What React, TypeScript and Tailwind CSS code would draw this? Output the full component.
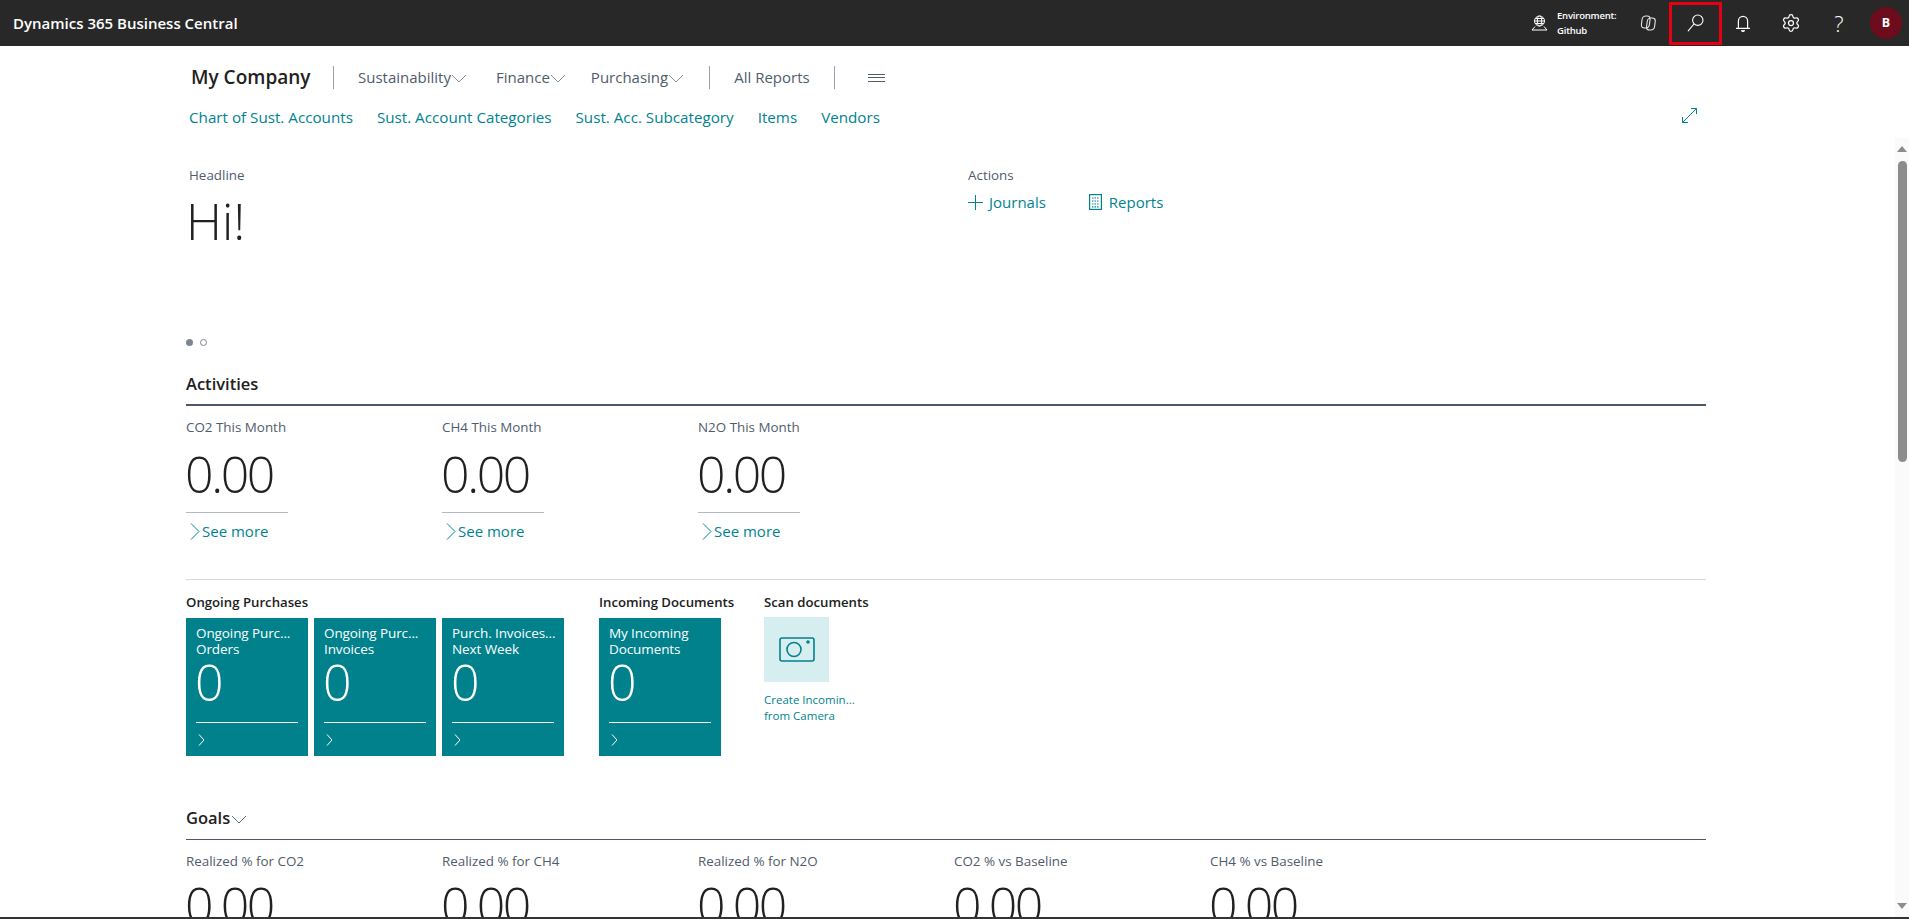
import { Settings } from "lucide-react";

const NAV_MENUS = [
  { name: "Sustainability", gap: "mr-[29px]" },
  { name: "Finance", gap: "mr-[25px]" },
  { name: "Purchasing", gap: "mr-[25px]" },
];
const NAV_LINKS = ["Chart of Sust. Accounts", "Sust. Account Categories", "Sust. Acc. Subcategory", "Items", "Vendors"];
const ACTIVITIES = ["CO2 This Month", "CH4 This Month", "N2O This Month"];
const GOALS = ["Realized % for CO2", "Realized % for CH4", "Realized % for N2O", "CO2 % vs Baseline", "CH4 % vs Baseline"];

function DownArrow({ className }: { className?: string }) {
  return (
    <svg width="16" height="9" viewBox="0 0 16 9" fill="none" stroke="currentColor" strokeWidth="0.9" className={className}>
      <path d="M1 1l7 7 7-7" />
    </svg>
  );
}

function Tile({ line1, line2 }: { line1: string; line2: string }) {
  return (
    <div className="w-[122px] h-[138px] bg-[#00818c] text-white px-[10px] pt-[7px] flex flex-col">
      <p className="text-[13.5px] leading-[16px] tracking-[-0.1px] whitespace-nowrap">{line1}</p>
      <p className="text-[13.5px] leading-[16px] tracking-[-0.1px] whitespace-nowrap">{line2}</p>
      <p className="text-[50px] leading-[50px] font-light ml-[-1px] h-[65px]">0</p>
      <div className="border-t border-white" />
      <svg width="7" height="12" viewBox="0 0 7 12" fill="none" stroke="white" strokeWidth="1" className="mt-[11px] ml-[2px]">
        <path d="M1 .5L6 6l-5 5.5" />
      </svg>
    </div>
  );
}

function Cue({ label }: { label: string }) {
  return <p className="text-[13.4px] leading-[20px] text-[#505c6d] whitespace-nowrap">{label}</p>;
}

export default function App() {
  return (
    <div className="h-[919px] w-full overflow-hidden flex flex-col bg-white font-['Open_Sans',sans-serif]">
      {/* Top bar */}
      <header className="h-[46px] shrink-0 bg-[#282828] text-white flex items-center">
        <span className="ml-[13px] text-[15px] font-semibold">Dynamics 365 Business Central</span>
        <div className="ml-auto flex items-center h-full">
          <svg width="17" height="16" viewBox="0 0 17 16" fill="none" stroke="white" strokeWidth="1" className="mr-[9px]">
            <circle cx="8.5" cy="6" r="5" />
            <ellipse cx="8.5" cy="6" rx="2.2" ry="5" />
            <path d="M3.5 6h10M4.2 3.5h8.6M4.2 8.5h8.6" />
            <path d="M4 11.5L1 15h15l-3-3.5" strokeLinejoin="round" />
          </svg>
          <div className="w-[66px] text-[9.5px] leading-[15px] font-semibold tracking-[-0.2px]">
            <p>Environment:</p>
            <p>Github</p>
          </div>
          <button className="w-[48px] h-full flex items-center justify-center">
            {/* Copilot */}
            <svg width="17" height="16" viewBox="0 0 17 16" fill="none" stroke="#e6e6e6" strokeWidth="1.1">
              <rect x="2.4" y="1" width="8" height="12" rx="3.4" transform="skewX(-7) translate(1.2 0)" />
              <rect x="7.4" y="3" width="8" height="12" rx="3.4" transform="skewX(-7) translate(1.6 0)" />
            </svg>
          </button>
          <button className="relative w-[48px] h-full flex items-center justify-center">
            <svg width="17" height="18" viewBox="0 0 17 18" fill="none" stroke="white" strokeWidth="1.1">
              <circle cx="10.8" cy="6.2" r="5.2" />
              <path d="M7 10L1.2 16.8" strokeLinecap="round" />
            </svg>
            {/* red annotation box */}
            <span className="absolute left-[-2px] right-[-3px] top-[2px] bottom-[1px] border-[3px] border-[#e60012] rounded-[1px]" />
          </button>
          <button className="w-[48px] h-full flex items-center justify-center">
            <svg width="14" height="17" viewBox="0 0 14 17" fill="none" stroke="white" strokeWidth="1.2">
              <path d="M2.4 13V6a4.6 4.6 0 019.2 0v7M.5 13.4h13" strokeLinecap="round" />
              <path d="M5.4 15.3a1.7 1.7 0 003.2 0" fill="white" />
            </svg>
          </button>
          <button className="w-[48px] h-full flex items-center justify-center">
            <Settings className="w-[20px] h-[20px]" strokeWidth={1.5} />
          </button>
          <button className="w-[48px] h-full flex items-center justify-center text-[22px] font-light">?</button>
          <div className="w-[46px] h-full flex items-center justify-center">
            <span className="w-[32px] h-[32px] rounded-full bg-[#6c0c1c] flex items-center justify-center text-[12.5px] font-bold">B</span>
          </div>
        </div>
      </header>

      {/* Role center nav */}
      <nav className="h-[92px] shrink-0 relative">
        <div className="h-[62px] pt-[1px] pl-[191px] flex items-center text-[#505c6d] text-[15px]">
          <span className="text-[19px] font-semibold text-[#212121] w-[142px] whitespace-nowrap">My Company</span>
          <div className="w-px h-[23px] bg-[#9aa1ac] mr-[24px]" />
          {NAV_MENUS.map((m) => (
            <span key={m.name} className={`flex items-center whitespace-nowrap ${m.gap}`}>
              {m.name}
              <DownArrow className="text-[#7d8592] mt-[2px]" />
            </span>
          ))}
          <div className="w-px h-[23px] bg-[#9aa1ac] mr-[24px]" />
          <span className="whitespace-nowrap">All Reports</span>
          <div className="w-px h-[23px] bg-[#9aa1ac] ml-[24px] mr-[33px]" />
          <div className="w-[17px] flex flex-col gap-[2.5px]">
            <div className="h-px bg-[#505c6d]" />
            <div className="h-px bg-[#505c6d]" />
            <div className="h-px bg-[#505c6d]" />
          </div>
        </div>
        <div className="pl-[189px] mt-[-2px] flex gap-[24px] text-[15.2px] leading-[22px] text-[#00838f]">
          {NAV_LINKS.map((l) => (
            <span key={l} className="whitespace-nowrap">{l}</span>
          ))}
        </div>
        <svg className="absolute left-[1682px] top-[62px]" width="15" height="15" viewBox="0 0 15 15" fill="none" stroke="#00838f" strokeWidth="1">
          <path d="M.5 14.5l14-14M9 .5h5.5V6M.5 9v5.5H6" />
        </svg>
      </nav>

      {/* Scrolling body */}
      <div className="flex-1 min-h-0 flex">
        <main className="flex-1 min-w-0 overflow-hidden pl-[186px] pr-[189px]">
          <section className="h-[233px] pt-[27px] flex">
            <div className="w-[782px] pl-[3px] flex flex-col">
              <Cue label="Headline" />
              <p className="text-[50px] leading-[60px] font-light text-[#212121] mt-[6px] ml-[-3px]">Hi!</p>
              <div className="mt-[88px] ml-[-3px] flex items-center gap-[7px]">
                <span className="w-[7px] h-[7px] rounded-full bg-[#7d8592]" />
                <span className="w-[7px] h-[7px] rounded-full border border-[#7d8592]" />
              </div>
            </div>
            <div className="flex flex-col">
              <Cue label="Actions" />
              <div className="flex items-center text-[15px] text-[#00838f] mt-[6px] leading-[22px]">
                <svg width="15" height="15" viewBox="0 0 15 15" stroke="#00838f" strokeWidth="1" className="mr-[6px]">
                  <path d="M7.5 0v15M0 7.5h15" />
                </svg>
                <span>Journals</span>
                <svg width="13" height="16" viewBox="0 0 13 16" fill="none" stroke="#00838f" strokeWidth="1.2" className="ml-[43px] mr-[7px]">
                  <rect x=".6" y=".6" width="11.8" height="14.8" />
                  <path d="M3 4h7M3 7h7M3 10h7M3 12.8h7" strokeDasharray="1.5 1" />
                </svg>
                <span>Reports</span>
              </div>
            </div>
          </section>

          {/* Activities */}
          <h2 className="text-[16.5px] leading-[26px] font-semibold text-[#212121]">Activities</h2>
          <div className="h-[2px] bg-[#4d5669] mt-[7px]" />
          <div className="flex mt-[11px]">
            {ACTIVITIES.map((a) => (
              <div key={a} className="w-[256px]">
                <Cue label={a} />
                <p className="text-[50px] leading-[60px] font-light tracking-[-2.4px] text-[#212121] mt-[7px] ml-[-1px]">0.00</p>
                <div className="w-[102px] border-t border-[#b4b8c0] mt-[8px]" />
                <div className="flex items-center mt-[7px] text-[15px] leading-[22px] text-[#00838f]">
                  <svg width="10" height="17" viewBox="0 0 10 17" fill="none" stroke="currentColor" strokeWidth="1" className="ml-[4px] mr-[2px]">
                    <path d="M1 .5l8 8-8 8" />
                  </svg>
                  <span>See more</span>
                </div>
              </div>
            ))}
          </div>
          <div className="h-px bg-[#d8d8d8] mt-[37px]" />

          {/* Cue groups */}
          <div className="flex mt-[13px]">
            <div className="w-[413px]">
              <h3 className="text-[13.2px] leading-[18px] font-semibold text-[#212121]">Ongoing Purchases</h3>
              <div className="flex gap-[6px] mt-[7px]">
                <Tile line1="Ongoing Purc..." line2="Orders" />
                <Tile line1="Ongoing Purc..." line2="Invoices" />
                <Tile line1="Purch. Invoices..." line2="Next Week" />
              </div>
            </div>
            <div className="w-[165px]">
              <h3 className="text-[13.2px] leading-[18px] font-semibold text-[#212121] whitespace-nowrap">Incoming Documents</h3>
              <div className="mt-[7px]">
                <Tile line1="My Incoming" line2="Documents" />
              </div>
            </div>
            <div>
              <h3 className="text-[13.2px] leading-[18px] font-semibold text-[#212121] whitespace-nowrap">Scan documents</h3>
              <div className="w-[65px] h-[65px] mt-[6px] bg-[#d6eef0] flex items-center justify-center">
                <svg width="36" height="25" viewBox="0 0 36 25" fill="none" stroke="#00818c" strokeWidth="1.6">
                  <rect x="1" y="1" width="34" height="23" rx="2" />
                  <circle cx="15" cy="12.5" r="7" />
                  <circle cx="29" cy="5" r="1" fill="#00818c" />
                </svg>
              </div>
              <div className="mt-[10px] text-[11.5px] leading-[16px] text-[#00838f] whitespace-nowrap">
                <p>Create Incomin...</p>
                <p>from Camera</p>
              </div>
            </div>
          </div>

          {/* Goals */}
          <div className="flex items-center mt-[49px] text-[16.5px] leading-[26px] font-semibold text-[#212121]">
            Goals
            <DownArrow className="text-[#505c6d] ml-[1px] mt-[2px]" />
          </div>
          <div className="h-px bg-[#4d5669] mt-[8px]" />
          <div className="flex mt-[11px]">
            {GOALS.map((g) => (
              <div key={g} className="w-[256px]">
                <Cue label={g} />
                <p className="text-[50px] leading-[60px] font-light tracking-[-2.4px] text-[#212121] mt-[4px] ml-[-1px]">0.00</p>
              </div>
            ))}
          </div>
        </main>

        {/* Scrollbar */}
        <div className="w-[14px] shrink-0 bg-[#fafafa] flex flex-col items-center pt-[8px] pb-[8px]">
          <div className="w-0 h-0 border-x-[5px] border-x-transparent border-b-[6px] border-b-[#8c8c8c]" />
          <div className="w-[9px] h-[301px] mt-[9px] rounded-full bg-[#8c8c8c]" />
          <div className="mt-auto w-0 h-0 border-x-[5px] border-x-transparent border-t-[6px] border-t-[#8c8c8c]" />
        </div>
      </div>
      <div className="h-[2px] shrink-0 bg-[#333333]" />
    </div>
  );
}
